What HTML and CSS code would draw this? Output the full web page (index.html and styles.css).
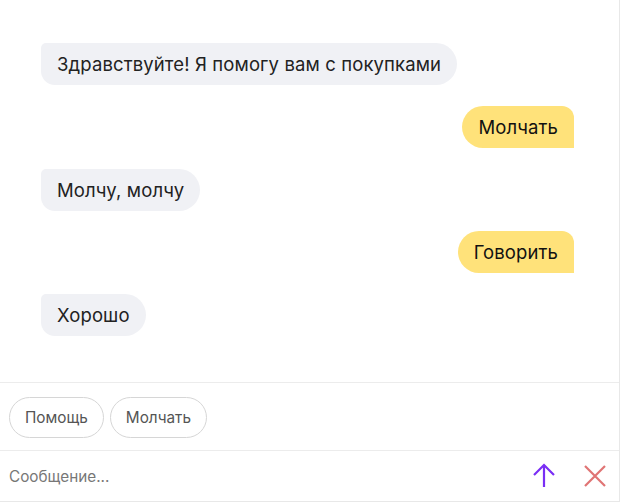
FILE: index.html
```html
<!DOCTYPE html>
<html lang="ru">
<head>
<meta charset="utf-8">
<link rel="stylesheet" href="styles.css">
</head>
<body>
<div class="chat">
  <div class="messages">
    <div class="msg bot">Здравствуйте! Я помогу вам с покупками</div>
    <div class="msg user">Молчать</div>
    <div class="msg bot">Молчу, молчу</div>
    <div class="msg user">Говорить</div>
    <div class="msg bot">Хорошо</div>
  </div>
  <div class="suggests">
    <button class="chip">Помощь</button>
    <button class="chip">Молчать</button>
  </div>
  <div class="composer">
    <div class="placeholder">Сообщение...</div>
    <button class="icon send" aria-label="Отправить">
      <svg width="24" height="26" viewBox="0 0 24 26"><path d="M12 24V2M2 12L12 2l10 10" fill="none" stroke="#7a2ef5" stroke-width="2.2"/></svg>
    </button>
    <button class="icon close" aria-label="Закрыть">
      <svg width="24" height="24" viewBox="0 0 24 24"><path d="M2 2l20 20M22 2L2 22" fill="none" stroke="#e07474" stroke-width="2.2"/></svg>
    </button>
  </div>
</div>
</body>
</html>
```
FILE: styles.css
```css
html, body {
  margin: 0;
  padding: 0;
  background: #fff;
}
body {
  font-family: Inter, "Noto Sans", sans-serif;
  color: #222;
}
.chat {
  width: 619px;
  height: 501px;
  border-right: 1px solid #e8e8e8;
  border-bottom: 1px solid #e8e8e8;
  display: flex;
  flex-direction: column;
}
.messages {
  flex: 1;
  display: flex;
  flex-direction: column;
  gap: 20.75px;
  padding: 43px 45px 0 41px;
}
.msg {
  height: 42px;
  box-sizing: border-box;
  padding: 0 16px;
  display: flex;
  align-items: center;
  font-size: 18.5px;
  letter-spacing: 0.12px;
}
.bot {
  align-self: flex-start;
  background: #f0f1f5;
  color: #222;
  border-radius: 5px 21px 21px 14px;
}
.user {
  align-self: flex-end;
  background: #ffe27a;
  color: #111;
  border-radius: 21px 12px 0 21px;
}
.suggests {
  border-top: 1px solid #ececec;
  display: flex;
  gap: 6px;
  padding: 14px 9px 12px;
}
.chip {
  height: 41px;
  padding: 0 15px;
  border: 1px solid #d6d6d6;
  border-radius: 21px;
  background: #fff;
  font-family: inherit;
  font-size: 15.3px;
  color: #555;
}
.composer {
  border-top: 1px solid #ececec;
  height: 50px;
  display: flex;
  align-items: center;
  padding: 0 12px 0 9px;
}
.placeholder {
  flex: 1;
  font-size: 15.3px;
  color: #777;
}
.icon {
  border: 0;
  background: none;
  padding: 0;
  display: flex;
}
.send {
  margin-right: 27px;
}
```
